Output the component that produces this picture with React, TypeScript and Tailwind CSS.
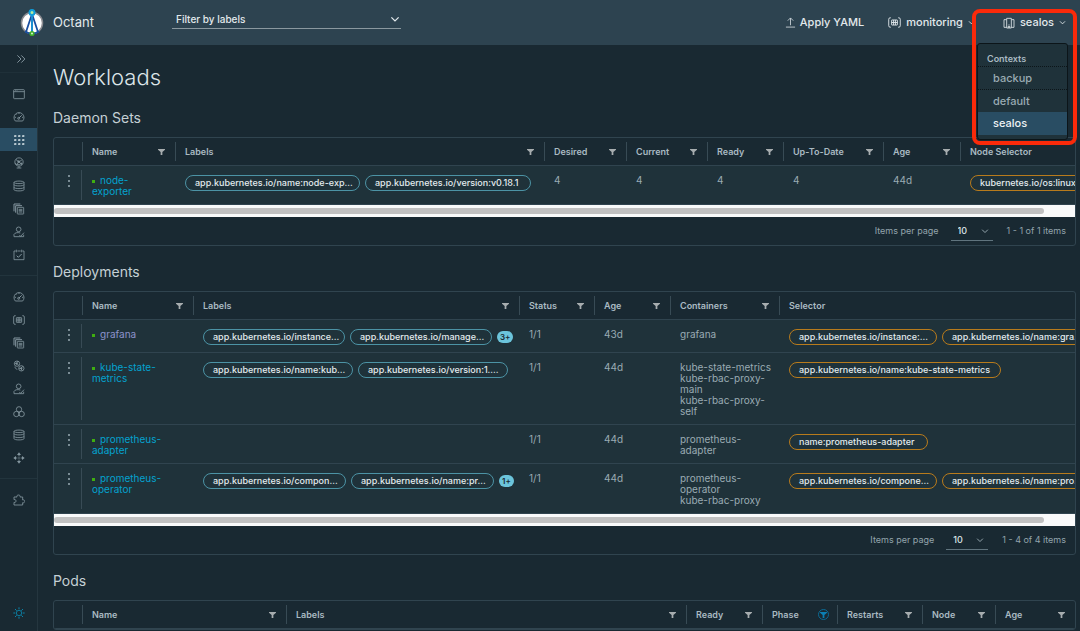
import { useState } from 'react';
import type { ReactNode } from 'react';
import clsx from 'clsx';

type Column = { title: string; width?: string; filter?: boolean; active?: boolean };
type Tag = { text: string; width: string };

const icons: Record<string, ReactNode> = {
  window: (
    <>
      <rect x="2" y="5" width="32" height="27" rx="2" />
      <path d="M2 11h32M6 8h2M11 8h2" />
    </>
  ),
  gauge: (
    <>
      <path d="M7 30a15 15 0 1 1 22 0zM18 5v4M5 19h4M27 19h4M9 10l2 2" />
      <path d="M17 22l9-9" strokeWidth="3" />
      <circle cx="17" cy="22" r="3" />
    </>
  ),
  grid: (
    <path
      fill="currentColor"
      stroke="none"
      d="M4 3h6v6H3zM16 3h6v6h-7zM28 3h6v6h-7zM4 15h6v6H3zM16 15h6v6h-7zM28 15h6v6h-7zM4 27h6v6H3zM16 27h6v6h-7zM28 27h6v6h-7z"
    />
  ),
  network: (
    <>
      <circle cx="18" cy="15" r="12.5" />
      <path d="M9 8l8 6 9-4M17 14l-5 9M17 14l8 7M6 19l6 4h10M18 28v5M11 33h14" />
      <circle cx="17" cy="14" r="2.5" fill="currentColor" />
      <circle cx="25" cy="20" r="2" fill="currentColor" />
    </>
  ),
  storage: (
    <path d="M3 7c0-5 30-5 30 0v22c0 5-30 5-30 0zM3 7c0 5 30 5 30 0M3 14c0 5 30 5 30 0M3 22c0 5 30 5 30 0" />
  ),
  files: (
    <>
      <path d="M3 25V3h19M8 29V8h19" strokeWidth="3" />
      <rect x="13" y="13" width="19" height="20" rx="1" />
      <path d="M17 19h11M17 23h11M17 27h11" />
    </>
  ),
  user: (
    <>
      <circle cx="17" cy="10" r="7" />
      <path d="M22 21c-9-3-17 0-19 4v7h29v-6M19 27l4 4 10-11" />
    </>
  ),
  calendar: (
    <>
      <path d="M8 6H3v26h30V6h-5M13 6h10M10 2v8M26 2v8" />
      <path d="M11 20l5 5 10-10" strokeWidth="3" />
    </>
  ),
  namespace: (
    <>
      <path d="M8 5H6Q2 5 2 9v18q0 4 4 4h2M28 5h2q4 0 4 4v18q0 4-4 4h-2" />
      <rect x="10" y="11" width="16" height="14" rx="1" />
      <path d="M15.500 11v14M20.500 11v14M10 18h16" />
    </>
  ),
  gears: (
    <>
      <circle cx="12" cy="11" r="8" />
      <circle cx="25" cy="25" r="8" />
      <path d="M5 10h6l4-7M11 10l6 6M18 25h6l5-6M24 25l3 7M6 20c0 5 3 7 7 8" />
      <circle cx="11" cy="11" r="2" fill="currentColor" />
      <circle cx="25" cy="25" r="2" fill="currentColor" />
    </>
  ),
  circles: (
    <>
      <circle cx="18" cy="10" r="8" />
      <circle cx="10" cy="24" r="8" />
      <circle cx="26" cy="24" r="8" />
    </>
  ),
  nodes: (
    <>
      <path fill="currentColor" stroke="none" d="M18 1l6 8H12zM18 35l6-8H12zM1 18l8-6v12zM35 18l-8-6v12z" />
      <path d="M18 9v4M18 23v4M9 18h4M23 18h4" />
      <circle cx="18" cy="18" r="2" fill="currentColor" stroke="none" />
    </>
  ),
  plugin: (
    <path d="M3 9h9c-3-8 12-8 9 0h8v9c8-3 8 11 0 8v7H3v-8c8 3 8-11 0-8z" />
  ),
  sun: (
    <>
      <circle cx="18" cy="18" r="8" />
      <path d="M18 1v6M18 29v6M1 18h6M29 18h6M6 6l5 5M25 25l5 5M6 30l5-5M25 11l5-5" strokeWidth="3" />
    </>
  ),
  collapse: <path d="M5 5l13 13L5 31M19 5l13 13-13 13" strokeWidth="3.500" />,
  upload: <path d="M18 27V4M9 12l9-9 9 9M3 33h30" />,
  context: (
    <path d="M10 31H3V8h7M26 8h7v23h-7M11 33V4h14v29zM16 33v-6h4v6M18 21v2" />
  ),
  chevron: <path d="M5 12l13 13 13-13" strokeWidth="4.500" />,
};

function Icon({ name, className = 'size-3' }: { name: string; className?: string }) {
  return (
    <svg
      viewBox="0 0 36 36"
      className={clsx('shrink-0', className)}
      fill="none"
      stroke="currentColor"
      strokeWidth="2.500"
      aria-hidden="true"
    >
      {icons[name]}
    </svg>
  );
}

function Logo() {
  return (
    <svg viewBox="0 0 24 28" className="h-7 w-6 shrink-0" aria-hidden="true">
      <circle cx="12" cy="14" r="10.500" fill="#fff" stroke="#8b8c91" strokeWidth="1.500" />
      <path d="M12 5L6 23M12 5l6 18" stroke="#1a4fa0" strokeWidth="1.800" fill="none" />
      <path d="M5 22.500q7 4.500 14 0" stroke="#1a4fa0" strokeWidth="1.500" fill="none" />
      <path d="M12 4v20" stroke="#1c8fd0" strokeWidth="2" />
      <circle cx="12" cy="3.500" r="2.500" fill="#b5e9a0" stroke="#0d9ddb" strokeWidth="2" />
      <circle cx="12" cy="24.500" r="1.800" fill="#d9f5d0" stroke="#3fae2a" strokeWidth="1.600" />
    </svg>
  );
}

const navGroups = [
  ['window', 'gauge', 'grid', 'network', 'storage', 'files', 'user', 'calendar'],
  ['gauge', 'namespace', 'files', 'gears', 'user', 'circles', 'storage', 'nodes'],
  ['plugin'],
];

function Sidebar() {
  return (
    <nav className="flex w-[38px] shrink-0 flex-col border-r border-[#25363f] text-[#84969f]">
      <button aria-label="Expand navigation" className="flex h-7 items-center justify-end border-b border-[#1f3039] pr-[11px]">
        <Icon name="collapse" className="size-[10px]" />
      </button>
      {navGroups.map((group, i) => (
        <ul key={i} className="border-b border-[#22343d] py-[9px] last-of-type:border-b-0">
          {group.map((name) => {
            const selected = name === 'grid';
            return (
              <li key={name}>
                <a
                  href="#"
                  aria-label={name}
                  className={clsx(
                    'flex h-[23px] items-center justify-center',
                    selected && 'bg-[#294d63] text-[#b4c5cd]'
                  )}
                >
                  <Icon name={name} />
                </a>
              </li>
            );
          })}
        </ul>
      ))}
      <button aria-label="Toggle theme" className="mt-auto mb-3 flex justify-center text-[#0a84aa]">
        <Icon name="sun" />
      </button>
    </nav>
  );
}

function FilterButton({ title, active }: { title: string; active?: boolean }) {
  return (
    <button
      aria-label={`Filter ${title}`}
      className={clsx(
        'flex size-[11px] items-center justify-center rounded-full',
        active ? 'border border-[#0b6a94] text-[#0b7fb3]' : 'text-[#a7adaf]'
      )}
    >
      <svg viewBox="0 0 8 8" className="size-[7px] shrink-0" fill="currentColor" aria-hidden="true">
        <path d="M0 1h8v1L5 4.500V8H3V4.500L0 2z" />
      </svg>
    </button>
  );
}

function Tags({ items, tone = 'teal', more }: { items: Tag[]; tone?: 'teal' | 'orange'; more?: string }) {
  return (
    <div className="flex items-center gap-[5px]">
      {items.map((tag) => (
        <span
          key={tag.text}
          className={clsx(
            'h-4 shrink-0 overflow-hidden rounded-full border pl-[9px] text-[9px] leading-[14px] font-medium whitespace-nowrap text-[#e3ebee]',
            tone === 'teal' ? 'border-[#4c93a5]' : 'border-[#b87b1c]',
            tag.width
          )}
        >
          {tag.text}
        </span>
      ))}
      {more && (
        <span className="flex h-3 items-center rounded-full bg-[#6cc5dc] px-[3px] text-[8px] font-semibold text-[#1b2a32]">
          {more}
        </span>
      )}
    </div>
  );
}

function NameLink({ name, visited }: { name: string; visited?: boolean }) {
  return (
    <div className="pr-2">
      <span className="mr-[5px] inline-block size-[3px] bg-[#3fae10] align-middle" />
      <a href="#" className={visited ? 'text-[#8d92cc]' : 'text-[#04a2cf]'}>
        {name}
      </a>
    </div>
  );
}

function Datagrid({
  title,
  columns,
  rows,
  minWidth,
  summary,
}: {
  title: string;
  columns: Column[];
  rows: ReactNode[][];
  minWidth?: string;
  summary?: string;
}) {
  return (
    <section>
      <h2 className="mt-4 mb-[9px] text-sm leading-5 text-[#c5d0d5]">{title}</h2>
      <div className="overflow-hidden rounded-[3px] border border-[#30444f]">
        <div className="overflow-hidden">
          <table className={clsx('w-full table-fixed border-separate border-spacing-0 text-left', minWidth)}>
            <colgroup>
              <col className="w-[28px]" />
              {columns.map((col) => (
                <col key={col.title} className={col.width} />
              ))}
            </colgroup>
            <thead>
              <tr>
                <td className="h-7 border-b border-[#30444f] p-0" />
                {columns.map((col) => (
                  <th key={col.title} scope="col" className="h-7 border-b border-[#30444f] p-0">
                    <div className="flex h-[19px] items-center justify-between border-l border-[#384b55] pr-2 pl-[9px] text-[9px] font-semibold text-[#a9bac2]">
                      {col.title}
                      {col.filter && <FilterButton title={col.title} active={col.active} />}
                    </div>
                  </th>
                ))}
              </tr>
            </thead>
            <tbody className="bg-[#1f323a] text-[10px] leading-[11px] text-[#9aabb3]">
              {rows.map((row, i) => (
                <tr key={i}>
                  <td className="h-px border-b border-[#30444f] px-0 py-1">
                    <div className="flex h-full items-start justify-end border-r border-[#384b55] pt-[5px]">
                      <button aria-label="Row actions" className="mr-[11px] flex flex-col gap-[3px] text-[#9aabb3]">
                        <span className="size-[2px] rounded-full bg-current" />
                        <span className="size-[2px] rounded-full bg-current" />
                        <span className="size-[2px] rounded-full bg-current" />
                      </button>
                    </div>
                  </td>
                  {row.map((cell, j) => (
                    <td key={j} className="border-b border-[#30444f] pt-[9px] pr-1 pb-[7px] pl-[10px] align-top">
                      {cell}
                    </td>
                  ))}
                </tr>
              ))}
            </tbody>
          </table>
        </div>
        {summary && (
          <>
            <div className="h-3 bg-[#f9fafa] py-[3px]">
              <div className="h-full w-[97%] rounded-full bg-[#c1c1c1]" />
            </div>
            <footer className="flex h-7 items-center justify-end gap-3 pr-[9px] text-[9px] text-[#93a4ac]">
              <label className="flex items-center gap-3">
                Items per page
                <span className="flex items-center border-b border-[#60747e]">
                  <select defaultValue="10" className="h-[18px] w-[30px] appearance-none pl-[7px] font-medium text-[#dbe4e8] outline-none">
                    <option>10</option>
                    <option>20</option>
                    <option>50</option>
                  </select>
                  <Icon name="chevron" className="mr-1 size-2" />
                </span>
              </label>
              <span className="pl-[2px]">{summary}</span>
            </footer>
          </>
        )}
      </div>
    </section>
  );
}

const daemonColumns: Column[] = [
  { title: 'Name', width: 'w-[93px]', filter: true },
  { title: 'Labels', filter: true },
  { title: 'Desired', width: 'w-[82px]', filter: true },
  { title: 'Current', width: 'w-[81px]', filter: true },
  { title: 'Ready', width: 'w-[76px]', filter: true },
  { title: 'Up-To-Date', width: 'w-[100px]', filter: true },
  { title: 'Age', width: 'w-[77px]', filter: true },
  { title: 'Node Selector', width: 'w-[151px]' },
];

const daemonRows: ReactNode[][] = [
  [
    <NameLink name="node-exporter" />,
    <Tags
      items={[
        { text: 'app.kubernetes.io/name:node-exp...', width: 'w-[175px]' },
        { text: 'app.kubernetes.io/version:v0.18.1', width: 'w-[166px]' },
      ]}
    />,
    '4',
    '4',
    '4',
    '4',
    '44d',
    <Tags tone="orange" items={[{ text: 'kubernetes.io/os:linux', width: 'w-[120px]' }]} />,
  ],
];

const deploymentColumns: Column[] = [
  { title: 'Name', width: 'w-[111px]', filter: true },
  { title: 'Labels', filter: true },
  { title: 'Status', width: 'w-[75px]', filter: true },
  { title: 'Age', width: 'w-[76px]', filter: true },
  { title: 'Containers', width: 'w-[109px]', filter: true },
  { title: 'Selector', width: 'w-[335px]' },
];

function Containers({ names }: { names: string[] }) {
  return names.map((name) => <div key={name}>{name}</div>);
}

const deploymentRows: ReactNode[][] = [
  [
    <NameLink name="grafana" visited />,
    <Tags
      more="3+"
      items={[
        { text: 'app.kubernetes.io/instance...', width: 'w-[142px]' },
        { text: 'app.kubernetes.io/manage...', width: 'w-[142px]' },
      ]}
    />,
    '1/1',
    '43d',
    <Containers names={['grafana']} />,
    <Tags
      tone="orange"
      items={[
        { text: 'app.kubernetes.io/instance:...', width: 'w-[148px]' },
        { text: 'app.kubernetes.io/name:gra...', width: 'w-[148px]' },
      ]}
    />,
  ],
  [
    <NameLink name="kube-state-metrics" />,
    <Tags
      items={[
        { text: 'app.kubernetes.io/name:kub...', width: 'w-[150px]' },
        { text: 'app.kubernetes.io/version:1....', width: 'w-[150px]' },
      ]}
    />,
    '1/1',
    '44d',
    <Containers names={['kube-state-metrics', 'kube-rbac-proxy-main', 'kube-rbac-proxy-self']} />,
    <Tags tone="orange" items={[{ text: 'app.kubernetes.io/name:kube-state-metrics', width: 'w-[212px]' }]} />,
  ],
  [
    <NameLink name="prometheus-adapter" />,
    null,
    '1/1',
    '44d',
    <Containers names={['prometheus-adapter']} />,
    <Tags tone="orange" items={[{ text: 'name:prometheus-adapter', width: 'w-[139px]' }]} />,
  ],
  [
    <NameLink name="prometheus-operator" />,
    <Tags
      more="1+"
      items={[
        { text: 'app.kubernetes.io/compon...', width: 'w-[143px]' },
        { text: 'app.kubernetes.io/name:pr...', width: 'w-[143px]' },
      ]}
    />,
    '1/1',
    '44d',
    <Containers names={['prometheus-operator', 'kube-rbac-proxy']} />,
    <Tags
      tone="orange"
      items={[
        { text: 'app.kubernetes.io/compone...', width: 'w-[148px]' },
        { text: 'app.kubernetes.io/name:pro...', width: 'w-[148px]' },
      ]}
    />,
  ],
];

const podColumns: Column[] = [
  { title: 'Name', width: 'w-[204px]', filter: true },
  { title: 'Labels', filter: true },
  { title: 'Ready', width: 'w-[76px]', filter: true },
  { title: 'Phase', width: 'w-[75px]', filter: true, active: true },
  { title: 'Restarts', width: 'w-[85px]', filter: true },
  { title: 'Node', width: 'w-[73px]', filter: true },
  { title: 'Age', width: 'w-[80px]', filter: true },
];

function ContextMenu({ current, onSelect }: { current: string; onSelect: (name: string) => void }) {
  return (
    <div className="absolute top-[43px] right-3 z-10 w-[91px] rounded-[3px] border border-[#0c1519] bg-[#1f323a] pt-2 pb-1">
      <h4 className="pl-[9px] text-[9px] leading-[14px] font-semibold text-[#a9bac2]">Contexts</h4>
      {['backup', 'default', 'sealos'].map((name) => (
        <button
          key={name}
          onClick={() => onSelect(name)}
          className={clsx(
            'block h-[23px] w-full pl-[15px] text-left text-[11px]',
            name === current ? 'bg-[#294d63] font-medium text-[#eef3f5]' : 'border-t border-dotted border-[#0c1519] text-[#9aabb3]'
          )}
        >
          {name}
        </button>
      ))}
    </div>
  );
}

export default function App() {
  const [context, setContext] = useState('sealos');

  return (
    <div className="flex h-screen flex-col overflow-hidden bg-[#192932] font-['Inter','Liberation_Sans',sans-serif]">
      <header className="relative flex h-[45px] shrink-0 items-center bg-[#2d4350] pr-[14px] pl-5 text-[11px] font-medium text-[#e2e9ec]">
        <Logo />
        <span className="ml-[9px] w-[119px] text-[13px] font-normal">Octant</span>
        <label className="mb-4 flex h-[19px] w-[229px] items-center self-end border-b border-[#8a989f] pr-[1px]">
          <select aria-label="Filter by labels" className="h-full min-w-0 flex-1 appearance-none pl-1 text-[10px] outline-none">
            <option>Filter by labels</option>
          </select>
          <Icon name="chevron" className="size-[10px]" />
        </label>
        <div className="ml-auto flex items-center">
          <button className="flex items-center gap-1">
            <Icon name="upload" className="size-[11px]" />
            Apply YAML
          </button>
          <button className="ml-6 flex items-center gap-[5px]">
            <Icon name="namespace" className="size-[13px]" />
            monitoring
            <Icon name="chevron" className="size-[7px]" />
          </button>
          <button aria-expanded="true" className="ml-7 flex items-center gap-[5px]">
            <Icon name="context" />
            {context}
            <Icon name="chevron" className="size-[7px]" />
          </button>
        </div>
        <ContextMenu current={context} onSelect={setContext} />
        <div className="pointer-events-none absolute top-[9px] right-[3px] z-20 h-[136px] w-[105px] rounded-lg border-4 border-[#fa2a0a]" />
      </header>

      <div className="flex min-h-0 flex-1">
        <Sidebar />
        <main className="min-w-0 flex-1 overflow-y-auto pt-[17px] pr-1 pl-[15px] [scrollbar-width:none]">
          <h1 className="text-[22px] leading-[30px] font-light text-[#dde5e9]">Workloads</h1>
          <Datagrid
            title="Daemon Sets"
            columns={daemonColumns}
            rows={daemonRows}
            minWidth="min-w-[1057px]"
            summary="1 - 1 of 1 items"
          />
          <Datagrid
            title="Deployments"
            columns={deploymentColumns}
            rows={deploymentRows}
            minWidth="min-w-[1060px]"
            summary="1 - 4 of 4 items"
          />
          <Datagrid title="Pods" columns={podColumns} rows={[]} />
        </main>
      </div>
    </div>
  );
}
